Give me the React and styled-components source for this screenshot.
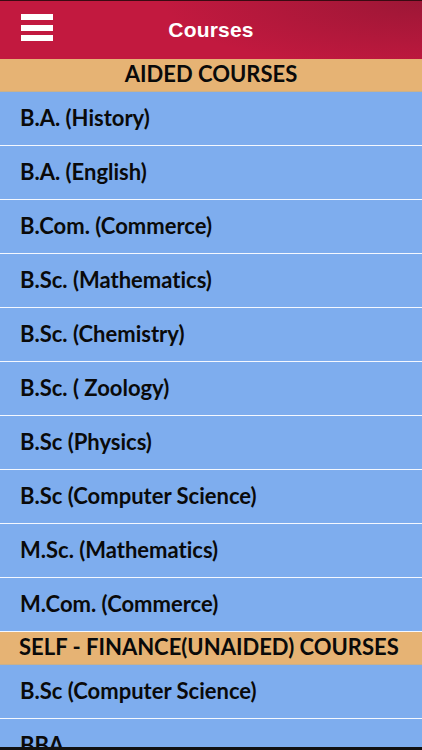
import React from 'react'
import styled, { createGlobalStyle } from 'styled-components';

const GlobalStyle = createGlobalStyle`
  html, body {
    margin: 0;
    padding: 0;
    background: #000;
  }
  body {
    width: 422px;
    height: 750px;
    overflow: hidden;
  }
`;

const sections = [
    {
        title: 'AIDED COURSES',
        courses: [
            'B.A. (History)',
            'B.A. (English)',
            'B.Com. (Commerce)',
            'B.Sc. (Mathematics)',
            'B.Sc. (Chemistry)',
            'B.Sc. ( Zoology)',
            'B.Sc (Physics)',
            'B.Sc (Computer Science)',
            'M.Sc. (Mathematics)',
            'M.Com. (Commerce)',
        ],
    },
    {
        title: 'SELF - FINANCE(UNAIDED) COURSES',
        left: true,
        courses: ['B.Sc (Computer Science)', 'BBA'],
    },
];

const App = () => {
    return (
        <>
            <GlobalStyle />
            <Screen>
                <NavBar>
                    <MenuButton aria-label='menu'>
                        <span />
                        <span />
                        <span />
                    </MenuButton>
                    <NavTitle>Courses</NavTitle>
                </NavBar>

                <List>
                    {sections.map((section) => (
                        <React.Fragment key={section.title}>
                            <SectionHeader $left={section.left}>{section.title}</SectionHeader>
                            {section.courses.map((course) => (
                                <Row key={course}>{course}</Row>
                            ))}
                        </React.Fragment>
                    ))}
                </List>
            </Screen>
        </>
    )
}

const Screen = styled.div`
    width: 422px;
    height: 750px;
    overflow: hidden;
    display: flex;
    flex-direction: column;
    border-top: 1px solid #3a0a12;
    border-bottom: 3px solid #111;
    box-sizing: border-box;
    background: #7eadee;
`;

const NavBar = styled.header`
    position: relative;
    flex: 0 0 58px;
    display: flex;
    align-items: center;
    justify-content: center;
    background:
        radial-gradient(ellipse 260px 70px at 100% 0%, rgba(120, 20, 45, 0.5), rgba(120, 20, 45, 0) 100%),
        #c2193f;
`;

const MenuButton = styled.button`
    position: absolute;
    left: 21px;
    top: 13px;
    width: 32px;
    padding: 0;
    border: none;
    background: none;
    display: flex;
    flex-direction: column;
    gap: 4.5px;

    & span {
        display: block;
        height: 6px;
        background: #fff;
    }
`;

const NavTitle = styled.h1`
    margin: 0;
    color: #fff;
    font-family: "Liberation Sans", Arial, sans-serif;
    font-weight: 700;
    font-size: 21px;
    letter-spacing: 0.2px;
    padding-bottom: 1px;
`;

const List = styled.div`
    display: flex;
    flex-direction: column;
    font-family: Lato, "Noto Sans", sans-serif;
    font-weight: 700;
    font-variant-ligatures: none;
    color: #0a0a0a;
`;

const SectionHeader = styled.div`
    height: 33px;
    box-sizing: border-box;
    background: #e6b374;
    border-bottom: 1px solid #c9b18c;
    display: flex;
    align-items: center;
    justify-content: ${(p) => (p.$left ? 'flex-start' : 'center')};
    padding: 0 0 3px ${(p) => (p.$left ? '19px' : '0')};
    font-size: 22px;
    line-height: 1;
`;

const Row = styled.div`
    height: 54px;
    box-sizing: border-box;
    display: flex;
    align-items: center;
    padding: 0 0 2px 20px;
    border-bottom: 1.5px solid #f4f8ff;
    font-size: 22px;
    line-height: 1;
`;

export default App
